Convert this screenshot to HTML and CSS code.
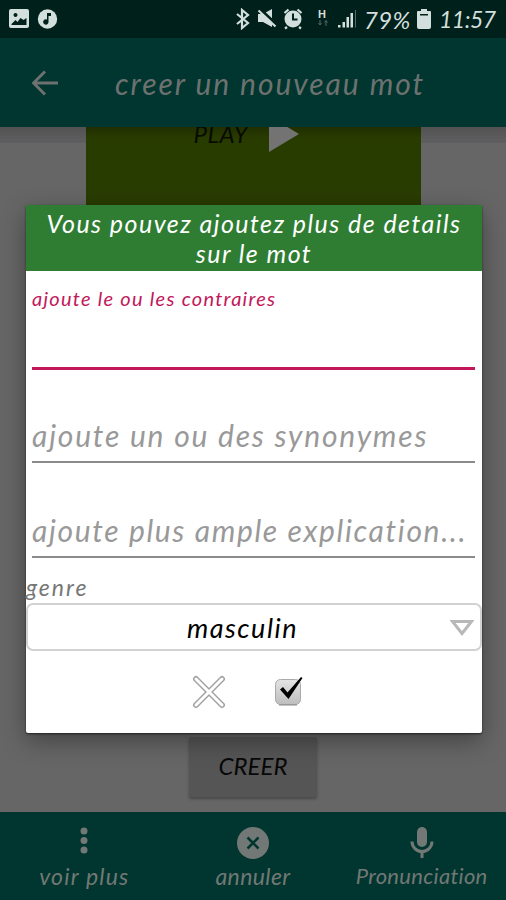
FILE: index.html
```
<!DOCTYPE html>
<html lang="fr">
<head>
    <meta charset="UTF-8">
    <meta name="viewport" content="width=device-width, initial-scale=1.0">
    <title>creer un nouveau mot</title>
    <link rel="stylesheet" href="styles.css">
</head>
<body>
    <div class="status-bar">
        <svg class="status-left" width="50" height="20" viewBox="0 0 50 20">
            <path fill-rule="evenodd" d="M2 0h16q2 0 2 2v15q0 2-2 2H2q-2 0-2-2V2Q0 0 2 0zM2.500 16h15v-7l-3 2-3-2-3 4-2-2-4 4zM6.500 4a2 2 0 1 0 .01 0z"/>
            <circle cx="38.500" cy="10" r="9.700"/>
            <path class="cut" d="M38 4h4v3h-2.500v5.500a2.700 2.700 0 1 1-1.500-2z"/>
        </svg>
        <svg class="status-icons" width="123" height="22" viewBox="0 0 123 22">
            <path class="line" d="M1 6l11 9-6 5V2l6 5L1 16"/>
            <path d="M22 6h5l9-5v18l-9-5h-5z"/>
            <path class="slash" d="M24 1l17 16"/>
            <path class="line" d="M22.500 2.500l17 16"/>
            <circle cx="57" cy="11" r="8.500"/>
            <path class="line" d="M48.500 5l4-3.500M61.500 1.500l4 3.500M51 19l-2 1.500M63 19l2 1.500"/>
            <path class="cut-line" d="M57 5.500v6h4.500"/>
            <text x="82" y="10" class="net">H</text>
            <path class="dim" d="M84 12v5M82.500 15l1.500 2 1.500-2M90 18v-5M88.500 14.500l1.500-2 1.500 2"/>
            <path d="M102 17h2.500v2.500H102zM106.500 14h2.500v5.500h-2.500zM110.500 9h2.500v10.500h-2.500zM114.500 5h2.500v14.500h-2.500z"/>
            <path class="faint" d="M119.500 2v17.500"/>
        </svg>
        <span class="percent">79%</span>
        <svg class="battery" width="14" height="20" viewBox="0 0 14 20">
            <path d="M4 0h6v2h3q1 0 1 1v15q0 2-2 2H2q-2 0-2-2V3q0-1 1-1h3z"/>
            <path class="cut" d="M3 5h8v1.500H3z"/>
        </svg>
        <span class="clock">11:57</span>
    </div>

    <header class="toolbar">
        <svg class="back" width="26" height="26" viewBox="0 0 26 26">
            <path d="M13 1.500L1.500 13 13 24.500M2 13h24"/>
        </svg>
        <h1>creer un nouveau mot</h1>
    </header>

    <main>
        <div class="play">
            <span>PLAY</span>
            <svg width="30" height="36" viewBox="0 0 30 36"><path d="M0 0l30 18L0 36z"/></svg>
        </div>
        <button class="create">CREER</button>
    </main>

    <nav>
        <div class="tab more">
            <svg width="32" height="32" viewBox="0 0 32 32">
                <circle cx="16" cy="4" r="3.500"/>
                <circle cx="16" cy="13.500" r="3.500"/>
                <circle cx="16" cy="23" r="3.500"/>
            </svg>
            <span>voir plus</span>
        </div>
        <div class="tab cancel">
            <svg width="32" height="32" viewBox="0 0 32 32">
                <circle cx="16" cy="16" r="16"/>
                <path class="cross" d="M10.500 10.500l11 11M21.500 10.500l-11 11"/>
            </svg>
            <span>annuler</span>
        </div>
        <div class="tab speak">
            <svg width="32" height="32" viewBox="0 0 32 32">
                <rect x="11" y="0" width="10" height="20" rx="5"/>
                <path class="stand" d="M6 14.500a10 10 0 0 0 20 0M16 24.500V31"/>
            </svg>
            <span>Pronunciation</span>
        </div>
    </nav>

    <div class="dialog">
        <h2>Vous pouvez ajoutez plus de details<br>sur le mot</h2>
        <div class="field active">
            <label>ajoute le ou les contraires</label>
        </div>
        <div class="field synonyms"><span>ajoute un ou des synonymes</span></div>
        <div class="field details"><span>ajoute plus ample explication...</span></div>
        <div class="genre">genre</div>
        <div class="spinner">
            <span>masculin</span>
            <svg width="24" height="18" viewBox="0 0 24 18">
                <path d="M2.500 3.500h19L12 15.500z"/>
            </svg>
        </div>
        <div class="actions">
            <svg width="34" height="34" viewBox="0 0 34 34">
                <path class="x-edge" d="M4 4l26 26M30 4L4 30"/>
                <path class="x-fill" d="M4 4l26 26M30 4L4 30"/>
            </svg>
            <svg width="30" height="32" viewBox="0 0 30 32">
                <defs>
                    <linearGradient id="box" x1="0" y1="0" x2="0" y2="1">
                        <stop offset="0" stop-color="#e4e4e4"/>
                        <stop offset="1" stop-color="#bdbdbd"/>
                    </linearGradient>
                </defs>
                <rect x="1.500" y="4.500" width="25" height="25" rx="5" fill="url(#box)" stroke="#aaa"/>
                <path class="base" d="M5 30h18"/>
                <path class="tick" d="M6 14.500l3-2.500 4.500 5.500L27 2l1.500 1L14.500 24z"/>
            </svg>
        </div>
    </div>
</body>
</html>
```
FILE: styles.css
```
* {
    box-sizing: border-box;
}
body {
    margin: 0;
    width: 506px;
    height: 900px;
    position: relative;
    display: flex;
    flex-direction: column;
    overflow: hidden;
    background: #666;
    font-family: Lato, 'Open Sans', sans-serif;
    font-style: italic;
    white-space: nowrap;
}
svg {
    display: block;
    flex: none;
}
h1, h2 {
    margin: 0;
    font-weight: normal;
}
.status-bar {
    height: 38px;
    padding: 0 10px 0 9px;
    display: flex;
    align-items: center;
    background: #00201b;
    color: #d3dfdc;
    fill: #d3dfdc;
    font-size: 24px;
}
.status-icons {
    margin-left: 177px;
}
.status-bar .line {
    fill: none;
    stroke: #d3dfdc;
    stroke-width: 2.2;
}
.status-bar .cut {
    fill: #00201b;
}
.status-bar .slash {
    stroke: #00201b;
    stroke-width: 3;
}
.status-bar .cut-line {
    fill: none;
    stroke: #00201b;
    stroke-width: 2;
}
.status-bar .net {
    font: bold 11px 'Liberation Sans', sans-serif;
}
.status-bar .dim, .status-bar .faint {
    fill: none;
    stroke: #526b66;
}
.percent {
    margin-left: 5px;
    width: 53px;
    letter-spacing: 0.3px;
}
.clock {
    margin-left: 8px;
    font-size: 23px;
    letter-spacing: -0.5px;
}
.toolbar {
    height: 89px;
    flex: none;
    display: flex;
    align-items: center;
    padding-left: 32px;
    background: #00362f;
    color: #6d7270;
}
.back {
    fill: none;
    stroke: #6d7270;
    stroke-width: 3;
}
.toolbar h1 {
    margin-left: 57px;
    font-size: 30px;
    letter-spacing: 1.95px;
}
main {
    flex: 1;
    display: flex;
    flex-direction: column;
    align-items: center;
    justify-content: space-between;
    background: linear-gradient(#525252, #5e5e60 14px, #59595b 15px, #666 16px);
}
.play {
    width: 335px;
    height: 90px;
    overflow: hidden;
    display: flex;
    align-items: flex-start;
    padding-left: 108px;
    background: linear-gradient(#202f00, #293c00 12px);
    color: #080c00;
    font-size: 24px;
}
.play span {
    width: 75px;
    margin-top: -8px;
    letter-spacing: 0.6px;
}
.play svg {
    margin-top: -11px;
    fill: #737373;
}
.create {
    width: 128px;
    height: 60px;
    margin-bottom: 15px;
    border: 0;
    border-radius: 2px;
    padding: 0 0 3px;
    background: #555;
    box-shadow: 0 2px 3px #484848;
    color: #080808;
    font: inherit;
    font-size: 24px;
}
nav {
    height: 88px;
    flex: none;
    display: grid;
    grid-template-columns: repeat(3, 1fr);
    background: #00362f;
    color: #727875;
    fill: #727875;
    font-size: 23px;
}
.tab {
    padding-top: 15px;
    display: flex;
    flex-direction: column;
    align-items: center;
}
.tab span {
    margin-top: 3px;
    line-height: 28px;
}
.more span {
    letter-spacing: 1.2px;
}
.cancel span {
    letter-spacing: 0.4px;
}
.speak span {
    font-size: 22px;
    letter-spacing: 0.3px;
}
.cross {
    fill: none;
    stroke: #00362f;
    stroke-width: 2.5;
}
.stand {
    fill: none;
    stroke: #727875;
    stroke-width: 3;
}
.dialog {
    position: absolute;
    left: 26px;
    top: 205px;
    width: 456px;
    height: 528px;
    background: #fff;
    border-radius: 2px;
    box-shadow: 0 1px 2px #222, 0 8px 24px rgba(0, 0, 0, 0.35);
}
.dialog h2 {
    height: 66px;
    padding-top: 3px;
    background: #2e7d32;
    color: #fff;
    font-size: 25px;
    line-height: 30px;
    letter-spacing: 1.45px;
    text-align: center;
}
.field {
    margin: 0 7px 0 6px;
    height: 95px;
    display: flex;
    align-items: flex-end;
    border-bottom: 2px solid #8b8b8b;
    color: #999;
    font-size: 30px;
    line-height: 36px;
    letter-spacing: 1.8px;
    padding-bottom: 8px;
}
.field.active {
    height: 99px;
    align-items: flex-start;
    padding-top: 14px;
    border-bottom: 3px solid #c2185b;
    color: #c2185b;
    font-size: 20px;
    line-height: 26px;
    letter-spacing: 1.27px;
}
.field.synonyms {
    height: 93px;
}
.field.details {
    letter-spacing: 1.65px;
}
.genre {
    height: 45px;
    padding-top: 15px;
    color: #777;
    font-size: 23px;
    line-height: 28px;
    letter-spacing: 2px;
}
.spinner {
    height: 48px;
    display: flex;
    align-items: center;
    padding: 0 6px 0 7px;
    border: 2px solid #d2d2d2;
    border-radius: 7px;
    color: #000;
    font-size: 27px;
    letter-spacing: 1.5px;
}
.spinner span {
    flex: 1;
    text-align: center;
}
.spinner svg {
    fill: #fff;
    stroke: #b8b8b8;
    stroke-width: 3;
}
.actions {
    display: flex;
    gap: 48px;
    padding: 24px 0 0 166px;
}
.x-edge, .x-fill {
    fill: none;
    stroke: #a3a3a3;
    stroke-width: 6;
    stroke-linecap: round;
}
.x-fill {
    stroke: #fff;
    stroke-width: 3;
}
.base {
    stroke: #888;
}
.tick {
    fill: #000;
}
```
